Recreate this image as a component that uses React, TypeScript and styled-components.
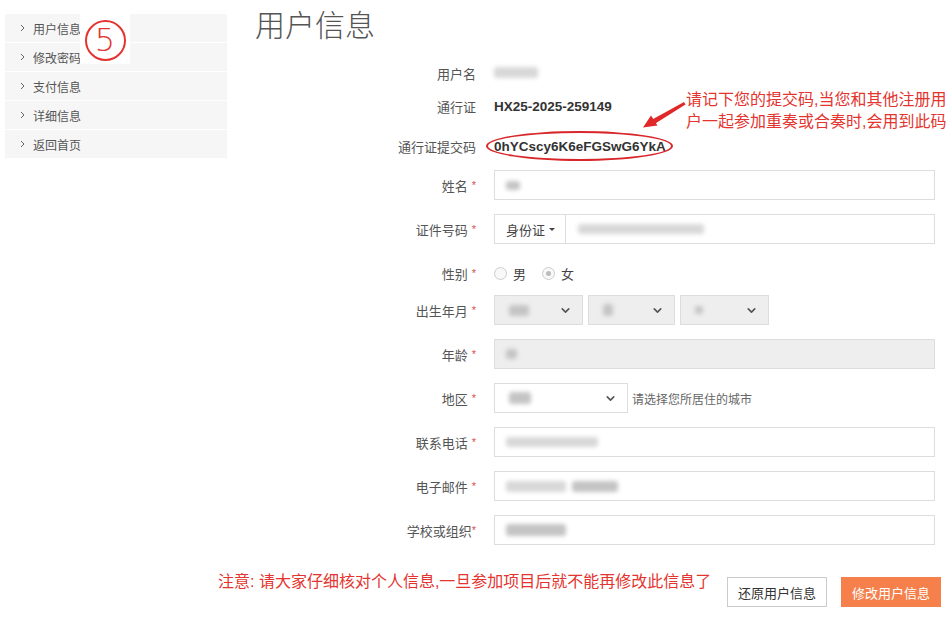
import React from "react";
import styled, { createGlobalStyle } from "styled-components";
import { ChevronDown } from "lucide-react";

const GlobalStyle = createGlobalStyle`
  body {
    margin: 0;
    background: #fff;
    font-family: "Liberation Sans", "Noto Sans CJK SC", sans-serif;
    color: #555;
  }
`;

const RED = "#e3342f";

const Page = styled.div`
  display: flex;
  align-items: flex-start;
  width: 947px;
`;

const Sidebar = styled.nav`
  position: relative;
  width: 222px;
  margin: 14px 0 0 5px;
  display: flex;
  flex-direction: column;
  gap: 1px;
`;

const NavItem = styled.div`
  display: flex;
  align-items: center;
  gap: 8px;
  height: 28px;
  padding-left: 15px;
  background: #f6f6f6;
  font-size: 12px;
  color: #555;
`;

// the red "5" that was pasted over the menu
const StepMark = styled.div`
  position: absolute;
  left: 75px;
  top: 0;
  width: 50px;
  height: 50px;
  background: #fff;
  display: flex;
  align-items: center;
  justify-content: center;
`;

const StepCircle = styled.div`
  width: 37px;
  height: 37px;
  border: 2px solid ${RED};
  border-radius: 50%;
  display: flex;
  align-items: center;
  justify-content: center;
  color: ${RED};
  font-family: "DejaVu Sans", sans-serif;
  font-size: 32px;
  font-weight: 300;
  line-height: 1;
  margin-top: 2px;
`;

const Main = styled.main`
  width: 680px;
  margin-left: 28px;
`;

const Title = styled.h1`
  margin: 8px 0 0;
  font-size: 30px;
  line-height: 36px;
  font-weight: 300;
  color: #555;
`;

const Form = styled.div`
  position: relative;
  padding-top: 13px;
  display: flex;
  flex-direction: column;
`;

const Row = styled.div<{ $h?: number; $mb?: number }>`
  display: grid;
  grid-template-columns: 221px 1fr;
  column-gap: 18px;
  align-items: center;
  height: ${(p) => p.$h ?? 30}px;
  margin-bottom: ${(p) => p.$mb ?? 0}px;
`;

const Label = styled.label`
  text-align: right;
  font-size: 13px;
  color: #555;
  white-space: nowrap;
`;

const Star = styled.span<{ $tight?: boolean }>`
  color: #d9534f;
  font-size: 11px;
  margin-left: ${(p) => (p.$tight ? 0 : 4)}px;
  vertical-align: 2px;
`;

const Value = styled.div`
  font-size: 13.5px;
  font-weight: bold;
  color: #333;
`;

const Blur = styled.span<{ $w: number; $h?: number; $dark?: boolean }>`
  display: inline-block;
  width: ${(p) => p.$w}px;
  height: ${(p) => p.$h ?? 10}px;
  background: ${(p) => (p.$dark ? "#c4c4c4" : "#d8d8d8")};
  border-radius: 3px;
  filter: blur(2px);
`;

const Input = styled.div<{ $disabled?: boolean }>`
  display: flex;
  align-items: center;
  height: 30px;
  box-sizing: border-box;
  border: 1px solid #ddd;
  background: ${(p) => (p.$disabled ? "#eee" : "#fff")};
  padding: 0 11px;
  gap: 6px;
`;

const Group = styled.div`
  display: flex;
  height: 30px;
  box-sizing: border-box;
  border: 1px solid #ddd;
`;

const Addon = styled.div`
  display: flex;
  align-items: center;
  gap: 4px;
  width: 71px;
  box-sizing: border-box;
  padding-left: 11px;
  border-right: 1px solid #ddd;
  font-size: 13px;
  color: #444;
`;

const Caret = styled.span`
  width: 0;
  height: 0;
  border-left: 3px solid transparent;
  border-right: 3px solid transparent;
  border-top: 3px solid #444;
`;

const GroupBody = styled.div`
  display: flex;
  align-items: center;
  padding-left: 12px;
`;

const Radios = styled.div`
  display: flex;
  align-items: center;
  font-size: 13px;
  color: #444;
`;

const Radio = styled.span<{ $checked?: boolean }>`
  width: 11px;
  height: 11px;
  border-radius: 50%;
  border: 1px solid #ccc;
  background: #f8f8f8;
  margin-right: 6px;
  display: flex;
  align-items: center;
  justify-content: center;
  &::after {
    content: "";
    display: ${(p) => (p.$checked ? "block" : "none")};
    width: 5px;
    height: 5px;
    border-radius: 50%;
    background: #bbb;
  }
`;

const RadioText = styled.span`
  margin-right: 16px;
`;

const Selects = styled.div`
  display: flex;
  align-items: center;
  gap: 5px;
`;

const Select = styled.div<{ $w: number; $disabled?: boolean }>`
  display: flex;
  align-items: center;
  justify-content: space-between;
  width: ${(p) => p.$w}px;
  height: 30px;
  box-sizing: border-box;
  border: 1px solid #ddd;
  background: ${(p) => (p.$disabled ? "#eee" : "#fff")};
  padding: 0 10px 0 14px;
  color: #444;
`;

const Hint = styled.span`
  margin-left: 4px;
  font-size: 12px;
  color: #666;
`;

const Inline = styled.div`
  display: flex;
  align-items: center;
`;

const Ring = styled.div`
  position: absolute;
  left: 231px;
  top: 87px;
  width: 187px;
  height: 30px;
  box-sizing: border-box;
  border: 2.5px solid #d8262a;
  border-radius: 50%;
  pointer-events: none;
`;

const Callout = styled.div`
  position: absolute;
  left: 431px;
  top: 45px;
  width: 270px;
  font-size: 16px;
  line-height: 22px;
  color: ${RED};
`;

const Arrow = styled.svg`
  position: absolute;
  left: 385px;
  top: 54px;
`;

const Footer = styled.div`
  display: flex;
  align-items: center;
  margin: 9px -6px 0 -37px;
`;

const Notice = styled.div`
  flex: 1;
  font-size: 16px;
  color: ${RED};
  padding-bottom: 24px;
`;

const Buttons = styled.div`
  display: flex;
  gap: 14px;
`;

const Button = styled.button<{ $primary?: boolean }>`
  width: 100px;
  height: 30px;
  border: 1px solid ${(p) => (p.$primary ? "#f5804b" : "#ccc")};
  background: ${(p) => (p.$primary ? "#f5804b" : "#fff")};
  color: ${(p) => (p.$primary ? "#fff" : "#333")};
  font-family: inherit;
  font-size: 13px;
  padding: 0;
`;

const Chevron = () => (
  <svg width="5" height="8" viewBox="0 0 5 8">
    <path d="M1 1l3 3-3 3" fill="none" stroke="#666" strokeWidth="1" />
  </svg>
);

const navItems = ["用户信息", "修改密码", "支付信息", "详细信息", "返回首页"];

const App = () => (
  <>
    <GlobalStyle />
    <Page>
      <Sidebar>
        {navItems.map((t) => (
          <NavItem key={t}>
            <Chevron />
            {t}
          </NavItem>
        ))}
        <StepMark>
          <StepCircle>5</StepCircle>
        </StepMark>
      </Sidebar>

      <Main>
        <Title>用户信息</Title>
        <Form>
          <Row $h={32}>
            <Label>用户名</Label>
            <div>
              <Blur $w={44} $h={11} />
            </div>
          </Row>
          <Row $h={34}>
            <Label>通行证</Label>
            <Value>HX25-2025-259149</Value>
          </Row>
          <Row $h={47}>
            <Label>通行证提交码</Label>
            <Value>0hYCscy6K6eFGSwG6YkA</Value>
          </Row>

          <Row $mb={14}>
            <Label>
              姓名<Star>*</Star>
            </Label>
            <Input>
              <Blur $w={14} $h={9} $dark />
            </Input>
          </Row>
          <Row $mb={14}>
            <Label>
              证件号码<Star>*</Star>
            </Label>
            <Group>
              <Addon>
                身份证
                <Caret />
              </Addon>
              <GroupBody>
                <Blur $w={126} $h={10} />
              </GroupBody>
            </Group>
          </Row>
          <Row $mb={7}>
            <Label>
              性别<Star>*</Star>
            </Label>
            <Radios>
              <Radio />
              <RadioText>男</RadioText>
              <Radio $checked />
              <RadioText>女</RadioText>
            </Radios>
          </Row>
          <Row $mb={14}>
            <Label>
              出生年月<Star>*</Star>
            </Label>
            <Selects>
              <Select $w={89} $disabled>
                <Blur $w={20} $h={11} $dark />
                <ChevronDown size={13} strokeWidth={3} color="#555" />
              </Select>
              <Select $w={87} $disabled>
                <Blur $w={10} $h={12} $dark />
                <ChevronDown size={13} strokeWidth={3} color="#555" />
              </Select>
              <Select $w={89} $disabled>
                <Blur $w={8} $h={8} $dark />
                <ChevronDown size={13} strokeWidth={3} color="#555" />
              </Select>
            </Selects>
          </Row>
          <Row $mb={14}>
            <Label>
              年龄<Star>*</Star>
            </Label>
            <Input $disabled>
              <Blur $w={11} $h={10} $dark />
            </Input>
          </Row>
          <Row $mb={14}>
            <Label>
              地区<Star>*</Star>
            </Label>
            <Inline>
              <Select $w={134}>
                <Blur $w={22} $h={12} $dark />
                <ChevronDown size={13} strokeWidth={3} color="#555" />
              </Select>
              <Hint>请选择您所居住的城市</Hint>
            </Inline>
          </Row>
          <Row $mb={14}>
            <Label>
              联系电话<Star>*</Star>
            </Label>
            <Input>
              <Blur $w={92} $h={10} />
            </Input>
          </Row>
          <Row $mb={14}>
            <Label>
              电子邮件<Star>*</Star>
            </Label>
            <Input>
              <Blur $w={60} $h={11} />
              <Blur $w={46} $h={11} $dark />
            </Input>
          </Row>
          <Row $mb={14}>
            <Label>
              学校或组织<Star $tight>*</Star>
            </Label>
            <Input>
              <Blur $w={60} $h={12} $dark />
            </Input>
          </Row>

          <Ring />
          <Arrow width="48" height="34" viewBox="0 0 48 34">
            <path d="M44 4 L45.5 6.5 L15.3 25.6 L12.7 21.2 Z" fill="#e0282a" />
            <path d="M3 29.5 L17.5 27.5 L11 17.5 Z" fill="#e0282a" />
          </Arrow>
          <Callout>
            请记下您的提交码,当您和其他注册用户一起参加重奏或合奏时,会用到此码
          </Callout>
        </Form>

        <Footer>
          <Notice>注意: 请大家仔细核对个人信息,一旦参加项目后就不能再修改此信息了</Notice>
          <Buttons>
            <Button>还原用户信息</Button>
            <Button $primary>修改用户信息</Button>
          </Buttons>
        </Footer>
      </Main>
    </Page>
  </>
);

export default App;
